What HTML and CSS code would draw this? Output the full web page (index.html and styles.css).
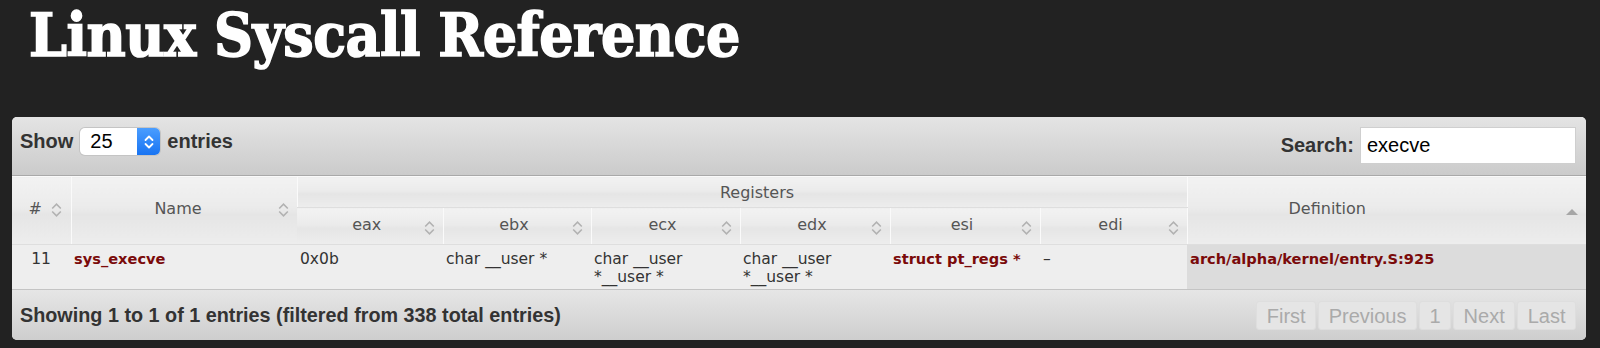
FILE: index.html
```html
<!DOCTYPE html>
<html lang="en">
<head>
    <meta charset="UTF-8">
    <title>Linux Syscall Reference</title>
    <link rel="stylesheet" href="styles.css">
</head>
<body>
    <h1 class="site-title">Linux Syscall Reference</h1>

    <div class="panel">
        <div class="toolbar">
            <div class="length">
                <span>Show</span>
                <span class="select">
                    <span class="select-value">25</span>
                    <span class="select-arrows">
                        <svg width="12" height="18" viewBox="0 0 12 18"><path d="M2.5 7 L6 3.5 L9.5 7 M2.5 11 L6 14.5 L9.5 11" fill="none" stroke="#fff" stroke-width="1.8" stroke-linecap="round" stroke-linejoin="round"/></svg>
                    </span>
                </span>
                <span>entries</span>
            </div>
            <label class="search">
                <span>Search:</span>
                <input type="text" value="execve">
            </label>
        </div>

        <table class="syscalls">
            <colgroup>
                <col style="width:59px">
                <col style="width:226px">
                <col style="width:146px">
                <col style="width:148px">
                <col style="width:149px">
                <col style="width:150px">
                <col style="width:150px">
                <col style="width:147px">
                <col>
            </colgroup>
            <thead>
                <tr class="head-top">
                    <th rowspan="2" class="sorting num">#<span class="sort-icon"><svg width="11" height="16" viewBox="0 0 11 16"><path d="M1.2 6.5 L5.5 2.2 L9.8 6.5 M1.2 9.5 L5.5 13.8 L9.8 9.5" fill="none" stroke="#b2b2b2" stroke-width="1.6"/></svg></span></th>
                    <th rowspan="2" class="sorting name">Name<span class="sort-icon"><svg width="11" height="16" viewBox="0 0 11 16"><path d="M1.2 6.5 L5.5 2.2 L9.8 6.5 M1.2 9.5 L5.5 13.8 L9.8 9.5" fill="none" stroke="#b2b2b2" stroke-width="1.6"/></svg></span></th>
                    <th colspan="6" class="group">Registers</th>
                    <th rowspan="2" class="sorted-asc">Definition<span class="sort-icon"><svg width="14" height="8" viewBox="0 0 14 8"><path d="M1 7 L7 1 L13 7 Z" fill="#a6a6a6"/></svg></span></th>
                </tr>
                <tr class="head-sub">
                    <th class="sorting">eax<span class="sort-icon"><svg width="11" height="16" viewBox="0 0 11 16"><path d="M1.2 6.5 L5.5 2.2 L9.8 6.5 M1.2 9.5 L5.5 13.8 L9.8 9.5" fill="none" stroke="#b2b2b2" stroke-width="1.6"/></svg></span></th>
                    <th class="sorting">ebx<span class="sort-icon"><svg width="11" height="16" viewBox="0 0 11 16"><path d="M1.2 6.5 L5.5 2.2 L9.8 6.5 M1.2 9.5 L5.5 13.8 L9.8 9.5" fill="none" stroke="#b2b2b2" stroke-width="1.6"/></svg></span></th>
                    <th class="sorting">ecx<span class="sort-icon"><svg width="11" height="16" viewBox="0 0 11 16"><path d="M1.2 6.5 L5.5 2.2 L9.8 6.5 M1.2 9.5 L5.5 13.8 L9.8 9.5" fill="none" stroke="#b2b2b2" stroke-width="1.6"/></svg></span></th>
                    <th class="sorting">edx<span class="sort-icon"><svg width="11" height="16" viewBox="0 0 11 16"><path d="M1.2 6.5 L5.5 2.2 L9.8 6.5 M1.2 9.5 L5.5 13.8 L9.8 9.5" fill="none" stroke="#b2b2b2" stroke-width="1.6"/></svg></span></th>
                    <th class="sorting">esi<span class="sort-icon"><svg width="11" height="16" viewBox="0 0 11 16"><path d="M1.2 6.5 L5.5 2.2 L9.8 6.5 M1.2 9.5 L5.5 13.8 L9.8 9.5" fill="none" stroke="#b2b2b2" stroke-width="1.6"/></svg></span></th>
                    <th class="sorting">edi<span class="sort-icon"><svg width="11" height="16" viewBox="0 0 11 16"><path d="M1.2 6.5 L5.5 2.2 L9.8 6.5 M1.2 9.5 L5.5 13.8 L9.8 9.5" fill="none" stroke="#b2b2b2" stroke-width="1.6"/></svg></span></th>
                </tr>
            </thead>
            <tbody>
                <tr>
                    <td class="num">11</td>
                    <td><a href="#">sys_execve</a></td>
                    <td>0x0b</td>
                    <td>char __user *</td>
                    <td>char __user *__user *</td>
                    <td>char __user *__user *</td>
                    <td><a href="#">struct pt_regs *</a></td>
                    <td>–</td>
                    <td class="sorted"><a href="#">arch/alpha/kernel/entry.S:925</a></td>
                </tr>
            </tbody>
        </table>

        <div class="footer">
            <div class="info">Showing 1 to 1 of 1 entries (filtered from 338 total entries)</div>
            <div class="paginate">
                <span class="page-btn">First</span>
                <span class="page-btn">Previous</span>
                <span class="page-btn">1</span>
                <span class="page-btn">Next</span>
                <span class="page-btn">Last</span>
            </div>
        </div>
    </div>
</body>
</html>
```

FILE: styles.css
```css
body {
    margin: 0;
    background: #222222;
    font-family: "DejaVu Sans", sans-serif;
}
.site-title {
    margin: 0;
    padding: 5px 0 0 29px;
    font-family: "DejaVu Serif Condensed", "DejaVu Serif", serif;
    font-stretch: condensed;
    font-weight: bold;
    font-size: 60px;
    line-height: 60px;
    letter-spacing: -0.5px;
    color: #fff;
    -webkit-text-stroke: 1.5px #fff;
}
.panel {
    margin: 52px 14px 0 12px;
    border-radius: 5px;
    overflow: hidden;
    background: #eeeeee;
}
.toolbar {
    display: flex;
    justify-content: space-between;
    align-items: flex-start;
    height: 59px;
    padding: 10px 10px 0 8px;
    box-sizing: border-box;
    border-bottom: 1px solid #a9a9a9;
    background: linear-gradient(#e4e4e4, #cbcbcb);
    font-family: "Liberation Sans", Arial, sans-serif;
    font-size: 20px;
    font-weight: bold;
    color: #333;
}
.length {
    display: flex;
    align-items: center;
    gap: 7px;
    margin-top: 1px;
}
.select {
    display: flex;
    width: 80px;
    height: 27px;
    border-radius: 5px;
    overflow: hidden;
    background: #fff;
    box-shadow: 0 0 0 1px #c4c4c4;
    font-weight: normal;
    color: #000;
}
.select-value {
    flex: 1;
    padding-left: 10px;
    line-height: 27px;
}
.select-arrows {
    width: 23px;
    display: flex;
    align-items: center;
    justify-content: center;
    background: linear-gradient(#4a9dff, #1874f2);
}
.search {
    display: flex;
    align-items: center;
    gap: 6px;
}
.search input {
    width: 216px;
    height: 37px;
    box-sizing: border-box;
    margin: 0;
    padding: 0 6px;
    border: 1px solid #cfcfcf;
    font-family: "Liberation Sans", Arial, sans-serif;
    font-size: 20px;
    color: #000;
    background: #fff;
}
.syscalls {
    width: 100%;
    border-collapse: collapse;
    table-layout: fixed;
}
.syscalls th {
    position: relative;
    padding: 0 22px 0 10px;
    font-size: 16px;
    font-weight: normal;
    color: #555;
    text-align: center;
    background: linear-gradient(#f2f2f2, #ebebeb 45%, #e5e5e5 55%, #ededed);
    border-left: 1px solid #fafafa;
    border-top: 1px solid #fafafa;
    border-bottom: 1px solid #dedede;
}
.syscalls th:first-child {
    border-left: none;
}
.head-top th {
    height: 30px;
}
.head-top th[rowspan] {
    padding-bottom: 5px;
}
.head-top th.group {
    padding: 0 0 0 30px;
}
.head-top th.sorted-asc {
    padding: 0 129px 5px 10px;
}
.head-sub th {
    height: 32px;
    padding: 0 20px 4px 14px;
}
.sort-icon {
    position: absolute;
    right: 8px;
    top: 50%;
    transform: translateY(-50%);
    display: flex;
}
.head-sub .sort-icon {
    top: calc(50% + 2px);
}
.head-top .name .sort-icon,
.head-top .num .sort-icon {
    top: 33px;
}
.head-top .num .sort-icon {
    right: 9px;
}
.head-top .sorted-asc .sort-icon {
    top: 35px;
    right: 7px;
}
.syscalls td {
    height: 45px;
    padding: 5px 4px 0 3px;
    box-sizing: border-box;
    vertical-align: top;
    font-size: 15.5px;
    line-height: 18px;
    color: #333;
    background: #eeeeee;
    border-bottom: 1px solid #c4c4c4;
}
.syscalls td.num {
    text-align: center;
}
.syscalls td.sorted {
    background: #dcdcdc;
}
.syscalls a {
    color: #7a0a0a;
    font-size: 14.6px;
    font-weight: bold;
    text-decoration: none;
}
.footer {
    display: flex;
    justify-content: space-between;
    align-items: flex-start;
    height: 50px;
    padding: 11px 10px 0 8px;
    box-sizing: border-box;
    background: linear-gradient(#e6e6e6, #cecece);
    font-family: "Liberation Sans", Arial, sans-serif;
    font-size: 20px;
}
.info {
    font-weight: bold;
    color: #333;
    line-height: 29px;
    font-size: 19.8px;
}
.paginate {
    display: flex;
    gap: 2px;
}
.page-btn {
    height: 29px;
    line-height: 29px;
    padding: 0 9.5px;
    border: 1px solid #dedede;
    border-radius: 3px;
    box-sizing: border-box;
    background: #e5e5e5;
    color: #aaa;
}
```
